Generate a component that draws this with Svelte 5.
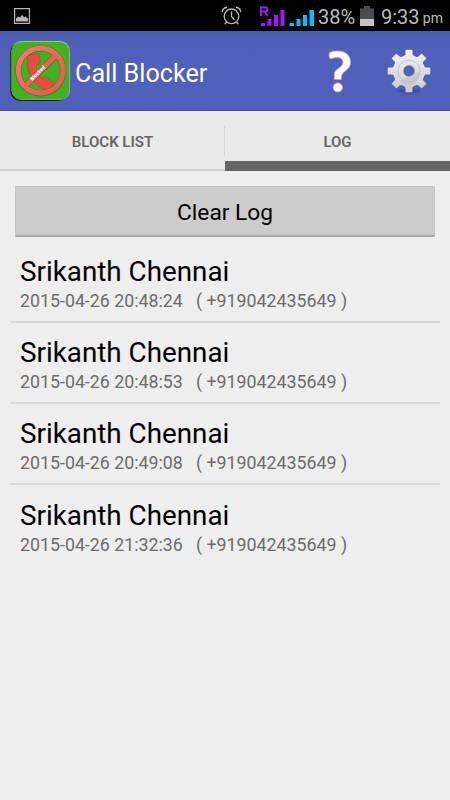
<script lang="ts">
	const tabs = [
		{ id: 'block', label: 'BLOCK LIST' },
		{ id: 'log', label: 'LOG' },
	];

	let active = $state('log');

	let calls = $state([
		{ name: 'Srikanth Chennai', time: '2015-04-26 20:48:24', number: '+919042435649' },
		{ name: 'Srikanth Chennai', time: '2015-04-26 20:48:53', number: '+919042435649' },
		{ name: 'Srikanth Chennai', time: '2015-04-26 20:49:08', number: '+919042435649' },
		{ name: 'Srikanth Chennai', time: '2015-04-26 21:32:36', number: '+919042435649' },
	]);

	const teeth = [0, 45, 90, 135, 180, 225, 270, 315];

	function clearLog() {
		calls = [];
	}
</script>

<div class="screen">
	<div class="status-bar">
		<svg class="picture" width="16" height="16" viewBox="0 0 16 16">
			<rect x="0.6" y="0.6" width="14.8" height="14.8" fill="none" stroke="#b8b8b8" stroke-width="1.2" />
			<path d="M2 13.500V10.500l2-2 2 1L8 7l2.500 2.500 1-1L14 10.500v3z" fill="#b8b8b8" />
		</svg>
		<svg class="alarm" width="21" height="20" viewBox="0 0 21 20" fill="none" stroke="#b4b4b4" stroke-width="1.4">
			<circle cx="10.500" cy="10.300" r="7.300" />
			<path d="M10.500 5.500v5l3 3.500M1.200 6.200C1.500 3.500 3.300 1.700 6 1.300M19.800 6.200c-.3-2.700-2.100-4.500-4.800-4.900M5.500 16l-1.700 2.200M15.500 16l1.700 2.200" />
		</svg>
		<svg class="signals" width="58" height="22" viewBox="0 0 58 22">
			<path d="M2 10V1.300h4.300a2 2 0 0 1 0 4.200H2M5.800 5.800L8.600 10" fill="none" stroke="#a912ff" stroke-width="1.900" />
			<g fill="#a912ff">
				<rect x="2" y="17" width="4" height="3" />
				<rect x="8.500" y="13" width="4" height="7" />
				<rect x="15" y="9" width="4" height="11" />
				<rect x="21.500" y="4" width="4" height="16" />
			</g>
			<g fill="#0bbcf5">
				<rect x="30.500" y="17" width="4.500" height="3" />
				<rect x="37.500" y="13" width="4" height="7" />
				<rect x="44" y="9" width="4" height="11" />
				<rect x="50.500" y="4" width="4.500" height="16" />
			</g>
		</svg>
		<span class="percent">38%</span>
		<svg class="battery" width="14" height="20" viewBox="0 0 14 20">
			<path d="M4 0h6v2.500h4V20H0V2.500h4z" fill="#4c4c4c" />
			<rect y="13" width="14" height="7" fill="#c4c4c4" />
		</svg>
		<span class="clock">9:33</span>
		<span class="meridiem">pm</span>
	</div>

	<header class="app-bar">
		<svg class="logo" width="62" height="62" viewBox="0 0 62 62">
			<defs>
				<linearGradient id="ring" x1="0" y1="0" x2="1" y2="1">
					<stop offset="0" stop-color="#ff7771" />
					<stop offset="1" stop-color="#f2534d" />
				</linearGradient>
			</defs>
			<rect x="1.300" y="2" width="58" height="59" rx="10" fill="#07220b" />
			<rect x="2.500" y="1" width="58.500" height="59" rx="10" fill="#8fcf78" />
			<rect x="2.500" y="2" width="57.800" height="57.500" rx="9.500" fill="#43b024" />
			<path d="M19.800 15l9-1.600q1 0 1.200 1l1.400 7q.2 1-.8 1.600L27.500 25c-.5 4.500 2 10.500 5.700 13.500l2-1.500q.8-.5 1.500 0l7.300 5.700q.8.700.2 1.600c-2 3.500-5.200 5.700-7.700 5.500C27.500 48.500 15.500 32 18.700 16q.2-.9 1.100-1z" fill="#ee4a40" stroke="#3c7d21" stroke-width="0.600" />
			<g fill="none">
				<circle cx="31.700" cy="30.800" r="22.400" stroke="#357722" stroke-width="6.400" opacity="0.700" />
				<path d="M16.200 46.300L47.300 15.200" stroke="#357722" stroke-width="6.400" opacity="0.800" />
				<circle cx="31.700" cy="30.600" r="22.400" stroke="url(#ring)" stroke-width="5" />
				<path d="M15.900 46.400L47.500 14.800" stroke="#f95d57" stroke-width="5" />
			</g>
			<text x="28.500" y="35" transform="rotate(-45 28.500 33)" text-anchor="middle" class="blocked">Blocked</text>
		</svg>
		<h1>Call Blocker</h1>
		<button class="action help" aria-label="Help">
			<svg width="26" height="44" viewBox="0 0 26 44">
				<path d="M2.500 2.500C8-.2 23.500-.8 23.500 12.500c0 8-9.200 8.400-9.200 14.800v2.200H7.300v-4.800c0-6.500 8.700-6.800 8.700-12.200C16 6.800 9 6.700 3.400 9c-1.500-1.500-1.500-5-.9-6.500z" fill="#fff" stroke="#d59bcb" stroke-width="0.800" />
				<circle cx="10.800" cy="37.500" r="4.600" fill="#fff" stroke="#d59bcb" stroke-width="0.800" />
			</svg>
		</button>
		<button class="action settings" aria-label="Settings">
			<svg width="46" height="46" viewBox="0 0 46 46">
				<defs>
					<linearGradient id="metal" x1="0" y1="0" x2="0" y2="1">
						<stop offset="0" stop-color="#f3f3f3" />
						<stop offset="1" stop-color="#c8c8c8" />
					</linearGradient>
					<mask id="gear">
						<g fill="#fff">
							<circle cx="23" cy="22" r="16" />
							{#each teeth as angle}
								<path d="M17.500 8l2-2.500V1.300q0-.6.600-.6h5.800q.6 0 .6.600v4.200l2 2.500z" transform="rotate({angle} 23 22)" />
							{/each}
						</g>
						<circle cx="23" cy="22" r="5.700" fill="#000" />
					</mask>
				</defs>
				<ellipse cx="23" cy="42" rx="12" ry="2.500" fill="#35407f" opacity="0.500" />
				<rect width="46" height="46" fill="url(#metal)" mask="url(#gear)" />
				<circle cx="23" cy="22" r="11" fill="none" stroke="#c3c3c3" stroke-width="0.900" />
				<path d="M13 32L29 24l4.500-1.500A11 11 0 0 1 13 30z" fill="#b8b8b8" opacity="0.400" />
				<circle cx="23" cy="22" r="5.900" fill="none" stroke="#b8b8b8" stroke-width="0.500" />
			</svg>
		</button>
	</header>

	<nav class="tabs">
		{#each tabs as tab}
			<button class="tab" class:active={active === tab.id} onclick={() => (active = tab.id)}>{tab.label}</button>
		{/each}
	</nav>

	<main>
		<button class="clear" onclick={clearLog}>Clear Log</button>
		<ul>
			{#each calls as call}
				<li>
					<span class="name">{call.name}</span>
					<span class="detail"><span class="time">{call.time}</span><span>( {call.number} )</span></span>
				</li>
			{/each}
		</ul>
	</main>
</div>

<style>
	:global(body) {
		margin: 0;
		background: #eee;
	}

	.screen {
		width: 450px;
		height: 800px;
		display: flex;
		flex-direction: column;
		overflow: hidden;
		background: #eee;
		font-family: Roboto, 'Noto Sans', sans-serif;
	}

	button {
		border: 0;
		padding: 0;
		background: none;
		font-family: inherit;
	}

	svg {
		display: block;
		flex: none;
	}

	.status-bar {
		height: 31px;
		flex: none;
		display: flex;
		align-items: center;
		box-sizing: border-box;
		padding: 1px 7px 0 14px;
		background: #000;
		color: #bcbcbc;
		white-space: nowrap;
	}

	.alarm {
		margin-left: 191px;
	}

	.signals {
		margin: 1px 0 0 17px;
	}

	.percent {
		width: 36px;
		margin-left: 1px;
		padding-top: 1px;
		font-size: 20px;
	}

	.battery {
		margin-left: 6px;
		margin-right: 7px;
	}

	.clock {
		width: 39px;
		padding-top: 1px;
		font-size: 20px;
	}

	.meridiem {
		margin-left: 3px;
		padding-top: 4px;
		font-size: 14px;
	}

	.app-bar {
		height: 80px;
		flex: none;
		display: flex;
		align-items: center;
		box-sizing: border-box;
		padding: 0 18px 0 9px;
		background: linear-gradient(#4b59ae, #5060ba 10px, #5060bb 78px, #4050ad);
		color: #fff;
	}

	.blocked {
		font-size: 5.2px;
		font-weight: 900;
		fill: #fff;
	}

	h1 {
		flex: 1;
		margin: 0 0 0 4px;
		padding-top: 4px;
		font-size: 25.2px;
		font-weight: 400;
		white-space: nowrap;
	}

	.help {
		margin: 2px 33px 0 0;
	}

	.settings {
		padding-top: 1px;
	}

	.tabs {
		height: 60px;
		flex: none;
		display: grid;
		grid-template-columns: 1fr 1fr;
		background: #eaeaea;
	}

	.tab {
		box-sizing: border-box;
		padding-top: 4px;
		border-bottom: 2px solid #d0d0d0;
		color: #666;
		font-size: 15px;
		font-weight: 600;
		background: linear-gradient(#d8d8d8, #d8d8d8) right 15px / 1px 30px no-repeat;
	}

	.tab.active {
		padding-top: 12px;
		border-bottom: 10px solid #656565;
		background: none;
	}

	.clear {
		display: block;
		width: 420px;
		height: 51px;
		margin: 15px auto 0;
		padding-top: 2px;
		border: 1px solid #c2c2c2;
		border-bottom: 2px solid #a8a8a8;
		border-radius: 1px;
		background: #ccc;
		color: #000;
		font-size: 22.7px;
	}

	ul {
		margin: 4.600px 10px 0;
		padding: 0;
		list-style: none;
	}

	li {
		height: 81.2px;
		display: flex;
		flex-direction: column;
		box-sizing: border-box;
		padding: 14.400px 10px 0;
		border-bottom: 2px solid #dadada;
		white-space: nowrap;
	}

	li:last-child {
		border-bottom: 0;
	}

	.name {
		line-height: 32px;
		font-size: 27.8px;
		color: #000;
	}

	.detail {
		display: flex;
		line-height: 26px;
		font-size: 17.8px;
		color: #6c6c6c;
	}

	.time {
		width: 176px;
	}
</style>
